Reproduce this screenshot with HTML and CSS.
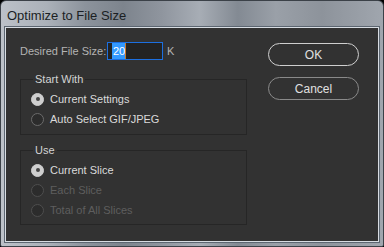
FILE: index.html
```html
<!DOCTYPE html>
<html>
<head>
<meta charset="utf-8">
<link rel="stylesheet" href="styles.css">
</head>
<body>
<div class="window">
  <div class="titlebar"><span class="title">Optimize to File Size</span></div>
  <div class="client">
    <div class="left">
      <div class="size-row">
        <span class="lbl">Desired File Size:</span>
        <span class="input"><span class="sel">20</span><span class="caret"></span></span>
        <span class="unit">K</span>
      </div>
      <fieldset class="group g1">
        <legend>Start With</legend>
        <div class="radio on"><span class="dot"></span><span>Current Settings</span></div>
        <div class="radio"><span class="dot"></span><span>Auto Select GIF/JPEG</span></div>
      </fieldset>
      <fieldset class="group g2">
        <legend>Use</legend>
        <div class="radio on"><span class="dot"></span><span>Current Slice</span></div>
        <div class="radio dis"><span class="dot"></span><span>Each Slice</span></div>
        <div class="radio dis"><span class="dot"></span><span>Total of All Slices</span></div>
      </fieldset>
    </div>
    <div class="right">
      <div class="btn ok">OK</div>
      <div class="btn">Cancel</div>
    </div>
  </div>
</div>
</body>
</html>
```

FILE: styles.css
```css
html, body { margin: 0; padding: 0; background: #000; }
body { width: 384px; height: 247px; overflow: hidden; font-family: "Liberation Sans", Arial, sans-serif; }
.window {
  width: 384px; height: 247px; box-sizing: border-box;
  border-radius: 6px 6px 2px 2px;
  border: 1px solid #3b4148;
  background:
    linear-gradient(90deg, #bcc1c8 0%, #abb1b9 12%, #8c939c 22%, #7d848d 32%, #8f959e 42%, #a7adb5 52%, #838a93 62%, #9aa0a8 72%, #8d939b 84%, #a0a6ae 100%);
  display: flex; flex-direction: column;
}
.titlebar { height: 26px; display: flex; align-items: center; padding-left: 6px; }
.title { font-size: 13px; color: #1b1f24; position: relative; top: 1px; }
.client {
  margin: 0 4px 4px 4px; flex: 1;
  border: 1px solid #d7dce2;
  background: #323232;
  display: flex;
  box-shadow: 0 0 0 1px #5c6671;
}
.left { width: 227px; padding: 14px 0 0 14px; }
.size-row { display: flex; align-items: center; height: 18px; }
.lbl { font-size: 11px; color: #b4b4b4; width: 87px; }
.input {
  width: 50px; height: 16px; border: 1px solid #1c6fe0; background: #232323;
  display: flex; align-items: center; padding-left: 4px; box-sizing: content-box;
}
.sel { font-size: 11px; color: #fff; background: #3399ff; line-height: 16px; padding: 0 0 0 1px; }
.caret { width: 1px; height: 16px; background: #c87a2a; }
.unit { font-size: 11px; color: #b4b4b4; margin-left: 4px; }
.group {
  margin: 0; padding: 4px 0 5px 10px; border: 1px solid #262626;
  width: 227px; box-sizing: border-box;
}
.g1 { margin-top: 13px; }
.g2 { margin-top: 9px; padding-top: 4px; padding-bottom: 4px; }
legend { font-size: 11px; line-height: 12px; color: #d4d4d4; padding: 0 2px; margin-left: 2px; }
.radio { display: flex; align-items: center; height: 20px; font-size: 11px; color: #dadada; }
.radio .dot {
  width: 11px; height: 11px; border-radius: 50%; border: 1px solid #6b6b6b; background: #2c2c2c;
  margin: 0 6px 0 0; flex: none; display: flex; align-items: center; justify-content: center;
}
.radio.on .dot { background: #cfcfcf; border-color: #cfcfcf; }
.radio.on .dot::after { content: ""; width: 4px; height: 4px; border-radius: 50%; background: #444; }
.radio.dis { color: #5e5e5e; }
.radio.dis .dot { border-color: #4e4e4e; }
.right { padding: 15px 0 0 21px; display: flex; flex-direction: column; gap: 11px; }
.btn {
  width: 89px; height: 21px; border: 1px solid #8a8a8a; border-radius: 12px;
  display: flex; align-items: center; justify-content: center;
  font-size: 12px; color: #e0e0e0;
}
.btn.ok { border-color: #cfcfcf; }
```
